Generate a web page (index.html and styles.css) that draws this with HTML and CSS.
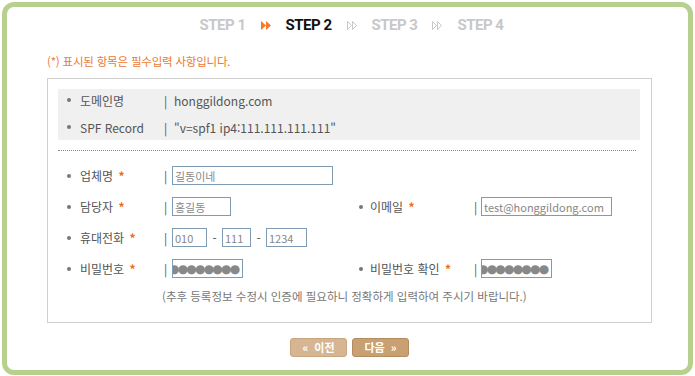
FILE: index.html
```html
<!DOCTYPE html>
<html lang="ko">
<head>
    <meta charset="UTF-8">
    <title>회원가입 - STEP 2</title>
    <link rel="stylesheet" href="styles.css">
</head>
<body>
    <div class="frame">
        <div class="steps">
            <span class="step">STEP 1</span>
            <svg class="arrow" width="10" height="9" viewBox="0 0 10 9"><path d="M0 0L5 4.5L0 9Z M5 0L10 4.5L5 9Z" fill="#f47a2a"/></svg>
            <span class="step current">STEP 2</span>
            <svg class="arrow" width="10" height="9" viewBox="0 0 10 9"><path d="M0.5 0.5L4.5 4.5L0.5 8.5Z M5.5 0.5L9.5 4.5L5.5 8.5Z" fill="none" stroke="#c8c8c8"/></svg>
            <span class="step">STEP 3</span>
            <svg class="arrow" width="10" height="9" viewBox="0 0 10 9"><path d="M0.5 0.5L4.5 4.5L0.5 8.5Z M5.5 0.5L9.5 4.5L5.5 8.5Z" fill="none" stroke="#c8c8c8"/></svg>
            <span class="step">STEP 4</span>
        </div>

        <p class="notice">(*) 표시된 항목은 필수입력 사항입니다.</p>

        <div class="form-box">
            <div class="info-band">
                <div class="info-row">
                    <span class="label">도메인명</span>
                    <span class="bar">|</span>
                    <span class="value">honggildong.com</span>
                </div>
                <div class="info-row">
                    <span class="label">SPF Record</span>
                    <span class="bar">|</span>
                    <span class="value">"v=spf1 ip4:111.111.111.111"</span>
                </div>
            </div>

            <div class="divider"></div>

            <div class="fields">
                <div class="field-row">
                    <div class="field left">
                        <span class="label">업체명 <em>*</em></span>
                        <span class="bar">|</span>
                        <input class="input w-company" type="text" value="길동이네">
                    </div>
                </div>
                <div class="field-row">
                    <div class="field left">
                        <span class="label">담당자 <em>*</em></span>
                        <span class="bar">|</span>
                        <input class="input w-name" type="text" value="홍길동">
                    </div>
                    <div class="field right">
                        <span class="label">이메일 <em>*</em></span>
                        <span class="bar">|</span>
                        <input class="input w-email" type="text" value="test@honggildong.com">
                    </div>
                </div>
                <div class="field-row">
                    <div class="field left">
                        <span class="label">휴대전화 <em>*</em></span>
                        <span class="bar">|</span>
                        <input class="input w-tel1" type="text" value="010">
                        <span class="dash">-</span>
                        <input class="input w-tel2" type="text" value="111">
                        <span class="dash">-</span>
                        <input class="input w-tel3" type="text" value="1234">
                    </div>
                </div>
                <div class="field-row">
                    <div class="field left">
                        <span class="label">비밀번호 <em>*</em></span>
                        <span class="bar">|</span>
                        <input class="input pw" type="text" value="●●●●●●●●" readonly>
                    </div>
                    <div class="field right">
                        <span class="label">비밀번호 확인 <em>*</em></span>
                        <span class="bar">|</span>
                        <input class="input pw" type="text" value="●●●●●●●●" readonly>
                    </div>
                </div>
            </div>

            <p class="hint">(추후 등록정보 수정시 인증에 필요하니 정확하게 입력하여 주시기 바랍니다.)</p>
        </div>

        <div class="buttons">
            <button class="btn prev">&laquo;&nbsp; 이전</button>
            <button class="btn next">다음 &nbsp;&raquo;</button>
        </div>
    </div>
</body>
</html>
```

FILE: styles.css
```css
* {
    margin: 0;
    padding: 0;
    box-sizing: border-box;
}

body {
    font-family: "Noto Sans CJK KR", "Noto Sans", sans-serif;
    font-size: 12px;
    color: #555;
    background: #fff;
}

.frame {
    margin: 2px;
    width: 691px;
    height: 373px;
    border: 5px solid #b7d08d;
    border-radius: 12px;
    padding: 8px 0 0 40px;
}

.steps {
    display: flex;
    align-items: center;
    justify-content: center;
    gap: 15px;
    height: 20px;
    padding-right: 32px;
}

.step {
    font-family: Roboto, sans-serif;
    font-weight: bold;
    font-size: 15px;
    letter-spacing: -0.5px;
    color: #c8c8c8;
}

.step.current {
    color: #111;
}

.arrow {
    display: block;
}

.notice {
    margin-top: 19px;
    color: #ec7a34;
    font-size: 11.5px;
    line-height: 14px;
    letter-spacing: -0.2px;
}

.form-box {
    margin-top: 10px;
    width: 605px;
    height: 245px;
    border: 1px solid #cfcfcf;
    padding: 10px 11px 0 10px;
}

.info-band {
    background: #f0f0f0;
    padding: 0 0 2px;
    display: flex;
    flex-direction: column;
    gap: 5px;
}

.info-row, .field {
    display: flex;
    align-items: center;
    height: 22px;
}

.label {
    position: relative;
    width: 106px;
    padding-left: 22px;
    color: #555;
    white-space: nowrap;
}

.label::before {
    content: "";
    position: absolute;
    left: 9px;
    top: 50%;
    width: 4px;
    height: 4px;
    margin-top: -2px;
    border-radius: 50%;
    background: #777;
}

.label em {
    font-style: normal;
    font-weight: bold;
    color: #f06a10;
    margin-left: 2px;
}

.bar {
    color: #555;
    width: 8px;
}

.value {
    margin-left: 2px;
    color: #555;
}

.divider {
    margin-top: 10px;
    width: 578px;
    border-top: 1px dotted #888;
}

.fields {
    margin-top: 15px;
    display: flex;
    flex-direction: column;
    gap: 12px;
}

.field-row {
    display: flex;
    height: 19px;
}

.field {
    height: 19px;
}

.field.left {
    width: 293px;
}

.field.right .label {
    width: 123px;
    padding-left: 19px;
}

.field.right .label::before {
    left: 8px;
}

.field.right .bar {
    width: 7px;
}

.input {
    height: 19px;
    border: 1px solid #7f9bb4;
    padding: 0 2px;
    font-family: "Noto Sans CJK KR", "Noto Sans", sans-serif;
    font-size: 11px;
    color: #888;
    outline: none;
}

.w-company { width: 161px; }
.w-name { width: 59px; }
.w-email { width: 131px; }
.w-tel1 { width: 35px; }
.w-tel2 { width: 29px; }
.w-tel3 { width: 41px; }

.pw {
    width: 71px;
    font-family: "DejaVu Sans", sans-serif;
    font-size: 12px;
    letter-spacing: -1.8px;
    padding: 0;
    text-indent: -4px;
}

.dash {
    width: 15px;
    text-align: center;
    color: #555;
}

.hint {
    margin-top: 11px;
    padding-left: 104px;
    color: #777;
    font-size: 11.5px;
    line-height: 14px;
}

.buttons {
    margin-top: 15px;
    width: 605px;
    display: flex;
    justify-content: center;
    gap: 5px;
}

.btn {
    width: 57px;
    height: 19px;
    border-radius: 3px;
    color: #fff;
    font-family: "Noto Sans CJK KR", sans-serif;
    font-weight: bold;
    font-size: 11px;
    line-height: 17px;
    cursor: pointer;
}

.btn.prev {
    background: #d6b692;
    border: 1px solid #c9a57d;
}

.btn.next {
    background: #c9a071;
    border: 1px solid #b58c5d;
}
```
